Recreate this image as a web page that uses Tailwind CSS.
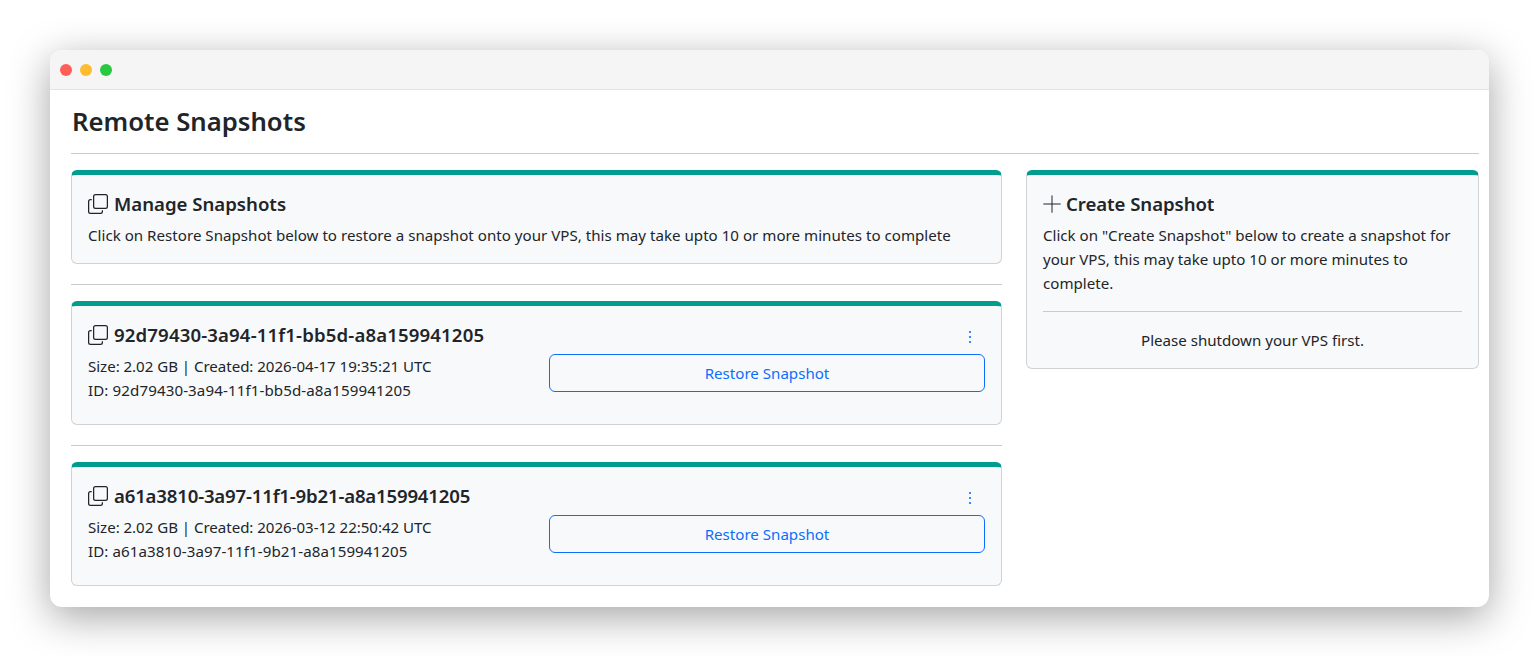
<!DOCTYPE html>
<html>
<head>
<meta charset="utf-8">
<script src="https://cdn.jsdelivr.net/npm/@tailwindcss/browser@4"></script>
</head>
<body class="bg-white h-[657px] overflow-hidden font-['Noto_Sans',sans-serif] text-[#212529] text-[15.1px] leading-6">
<div class="pt-[50px] pl-[50px]">
  <div class="w-[1439px] h-[557px] bg-white rounded-xl overflow-hidden shadow-[0_10px_40px_rgba(0,0,0,0.36)]">
    <div class="h-10 bg-[#f5f5f5] border-b border-[#e3e3e3] flex items-center gap-2 pl-2.5">
      <span class="w-3 h-3 rounded-full bg-[#ff5f57]"></span>
      <span class="w-3 h-3 rounded-full bg-[#febc2e]"></span>
      <span class="w-3 h-3 rounded-full bg-[#28c840]"></span>
    </div>
    <div class="pl-[21px] pr-2.5">
      <h1 class="text-[25.7px] leading-[31px] font-semibold pt-[16px] pb-[16px] pl-px border-b border-[#cacaca] h-[64px]">Remote Snapshots</h1>
      <div class="flex gap-6 mt-4 items-start">
        <div class="w-[931px] shrink-0">
          <section class="h-[94px] bg-[#f8f9fb] border border-[#d0d2d5] border-t-[5px] border-t-[#009d8f] rounded-md px-4 pt-[17px]">
            <h2 class="flex items-center text-[18.6px] leading-6 font-semibold">
              <svg class="w-5 h-5 mr-1.5" viewBox="0 0 16 16" fill="currentColor"><path fill-rule="evenodd" d="M4 2a2 2 0 0 1 2-2h8a2 2 0 0 1 2 2v8a2 2 0 0 1-2 2H6a2 2 0 0 1-2-2V2Zm2-1a1 1 0 0 0-1 1v8a1 1 0 0 0 1 1h8a1 1 0 0 0 1-1V2a1 1 0 0 0-1-1H6ZM2 5a1 1 0 0 0-1 1v8a1 1 0 0 0 1 1h8a1 1 0 0 0 1-1v-1h1v1a2 2 0 0 1-2 2H2a2 2 0 0 1-2-2V6a2 2 0 0 1 2-2h1v1H2Z"/></svg>
              Manage Snapshots
            </h2>
            <p class="mt-[7px] tracking-[0.02px]">Click on Restore Snapshot below to restore a snapshot onto your VPS, this may take upto 10 or more minutes to complete</p>
          </section>
          <div class="border-t border-[#cacaca] mt-5 mb-4"></div>
          <section class="h-[124px] bg-[#f8f9fb] border border-[#d0d2d5] border-t-[5px] border-t-[#009d8f] rounded-md pl-4 pr-4 pt-[17px] flex justify-between">
            <div>
              <h2 class="flex items-center text-[18.6px] leading-6 font-semibold">
                <svg class="w-5 h-5 mr-1.5" viewBox="0 0 16 16" fill="currentColor"><path fill-rule="evenodd" d="M4 2a2 2 0 0 1 2-2h8a2 2 0 0 1 2 2v8a2 2 0 0 1-2 2H6a2 2 0 0 1-2-2V2Zm2-1a1 1 0 0 0-1 1v8a1 1 0 0 0 1 1h8a1 1 0 0 0 1-1V2a1 1 0 0 0-1-1H6ZM2 5a1 1 0 0 0-1 1v8a1 1 0 0 0 1 1h8a1 1 0 0 0 1-1v-1h1v1a2 2 0 0 1-2 2H2a2 2 0 0 1-2-2V6a2 2 0 0 1 2-2h1v1H2Z"/></svg>
                <span class="tracking-[0.14px]">92d79430-3a94-11f1-bb5d-a8a159941205</span>
              </h2>
              <p class="mt-[7px] tracking-[-0.04px]">Size: 2.02 GB | Created: 2026-04-17 19:35:21 UTC</p>
              <p class="tracking-[0.11px]">ID: 92d79430-3a94-11f1-bb5d-a8a159941205</p>
            </div>
            <div class="w-[436px] flex flex-col items-stretch">
              <div class="h-[28px] flex justify-end items-center pr-[7px]">
                <svg class="w-4 h-4 text-[#0d6efd]" viewBox="0 0 16 16" fill="currentColor"><circle cx="8" cy="3" r="1.1"/><circle cx="8" cy="8" r="1.1"/><circle cx="8" cy="13" r="1.1"/></svg>
              </div>
              <button class="h-[38px] mt-[3px] border border-[#0d6efd] rounded-md text-[#0d6efd] text-center">Restore Snapshot</button>
            </div>
          </section>
          <div class="border-t border-[#cacaca] mt-5 mb-4"></div>
          <section class="h-[124px] bg-[#f8f9fb] border border-[#d0d2d5] border-t-[5px] border-t-[#009d8f] rounded-md pl-4 pr-4 pt-[17px] flex justify-between">
            <div>
              <h2 class="flex items-center text-[18.6px] leading-6 font-semibold">
                <svg class="w-5 h-5 mr-1.5" viewBox="0 0 16 16" fill="currentColor"><path fill-rule="evenodd" d="M4 2a2 2 0 0 1 2-2h8a2 2 0 0 1 2 2v8a2 2 0 0 1-2 2H6a2 2 0 0 1-2-2V2Zm2-1a1 1 0 0 0-1 1v8a1 1 0 0 0 1 1h8a1 1 0 0 0 1-1V2a1 1 0 0 0-1-1H6ZM2 5a1 1 0 0 0-1 1v8a1 1 0 0 0 1 1h8a1 1 0 0 0 1-1v-1h1v1a2 2 0 0 1-2 2H2a2 2 0 0 1-2-2V6a2 2 0 0 1 2-2h1v1H2Z"/></svg>
                <span class="tracking-[-0.18px]">a61a3810-3a97-11f1-9b21-a8a159941205</span>
              </h2>
              <p class="mt-[7px] tracking-[-0.04px]">Size: 2.02 GB | Created: 2026-03-12 22:50:42 UTC</p>
              <p class="tracking-[0.08px]">ID: a61a3810-3a97-11f1-9b21-a8a159941205</p>
            </div>
            <div class="w-[436px] flex flex-col items-stretch">
              <div class="h-[28px] flex justify-end items-center pr-[7px]">
                <svg class="w-4 h-4 text-[#0d6efd]" viewBox="0 0 16 16" fill="currentColor"><circle cx="8" cy="3" r="1.1"/><circle cx="8" cy="8" r="1.1"/><circle cx="8" cy="13" r="1.1"/></svg>
              </div>
              <button class="h-[38px] mt-[3px] border border-[#0d6efd] rounded-md text-[#0d6efd] text-center">Restore Snapshot</button>
            </div>
          </section>
        </div>
        <section class="w-[453px] h-[199px] bg-[#f8f9fb] border border-[#d0d2d5] border-t-[5px] border-t-[#009d8f] rounded-md px-4 pt-[17px]">
          <h2 class="flex items-center text-[18.6px] leading-6 font-semibold">
            <svg class="w-5 h-5 mr-[3px] -ml-px" viewBox="0 0 16 16" fill="currentColor"><path d="M8 1a.4.4 0 0 1 .4.4v6.200h6.200a.4.4 0 0 1 0 .8H8.400v6.200a.4.4 0 0 1-.8 0V8.400H1.400a.4.4 0 0 1 0-.8h6.200V1.400A.4.4 0 0 1 8 1z"/></svg>
            <span class="ml-px tracking-[-0.06px]">Create Snapshot</span>
          </h2>
          <p class="mt-[7px]">Click on "Create Snapshot" below to create a snapshot for your VPS, this may take upto 10 or more minutes to complete.</p>
          <div class="border-t border-[#cacaca] mt-4"></div>
          <p class="text-center mt-4">Please shutdown your VPS first.</p>
        </section>
      </div>
    </div>
  </div>
</div>
</body>
</html>
